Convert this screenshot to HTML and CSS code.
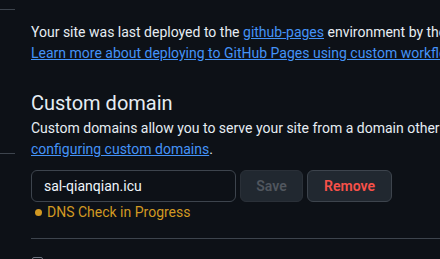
FILE: index.html
```html
<!DOCTYPE html>
<html lang="en">
<head>
    <meta charset="UTF-8">
    <title>GitHub Pages</title>
    <link rel="stylesheet" href="styles.css">
</head>
<body>
    <div class="layout">
        <!-- left nav edge -->
        <div class="gutter">
            <div class="nav-line"></div>
            <div class="nav-line lower"></div>
        </div>

        <div class="main">
            <p class="deploy-note">
                Your site was last deployed to the <a href="#">github-pages</a> environment by the pages build and deployment workflow.<br>
                <a href="#">Learn more about deploying to GitHub Pages using custom workflows</a>
            </p>

            <h2 class="section-title">Custom domain</h2>
            <p class="section-desc">
                Custom domains allow you to serve your site from a domain other than <span class="nowrap">bobbyjames.github.io</span>. <a href="#">Learn more about</a><br>
                <a href="#">configuring custom domains</a>.
            </p>

            <div class="domain-form">
                <input type="text" class="domain-input" value="sal-qianqian.icu">
                <button class="btn btn-save" disabled>Save</button>
                <button class="btn btn-remove">Remove</button>
            </div>
            <div class="dns-status"><span class="dot"></span>DNS Check in Progress</div>

            <div class="divider"></div>
            <div class="checkbox"></div>
        </div>
    </div>
</body>
</html>
```

FILE: styles.css
```css
body {
    margin: 0;
    background-color: #0d1117;
    color: #e6edf3;
    font-family: Roboto, "Noto Sans", sans-serif;
    font-size: 14px;
    overflow: hidden;
    height: 259px;
}
a {
    color: #4493f8;
}
.layout {
    display: flex;
    width: 1000px;
}
.gutter {
    width: 15px;
    padding-top: 9px;
    margin-right: 16px;
}
.nav-line {
    height: 1px;
    background-color: #3d444d;
}
.nav-line.lower {
    margin-top: 143px;
}
.main {
    flex: 1;
}
.deploy-note {
    margin: 22px 0 0 0;
    line-height: 21px;
    white-space: nowrap;
}
.section-title {
    margin: 24px 0 0 0;
    font-size: 20px;
    font-weight: 400;
    line-height: 30px;
}
.section-desc {
    margin: 0;
    line-height: 21px;
    white-space: nowrap;
}
.domain-form {
    display: flex;
    gap: 4px;
    margin-top: 10px;
}
.domain-input {
    box-sizing: border-box;
    width: 205px;
    height: 32px;
    padding: 0 12px;
    background-color: #0d1117;
    border: 1px solid #3d444d;
    border-radius: 6px;
    color: #f0f6fc;
    font-family: inherit;
    font-size: 14px;
    outline: none;
}
.btn {
    box-sizing: border-box;
    height: 32px;
    border-radius: 6px;
    border: 1px solid #3d444d;
    background-color: #212830;
    font-family: inherit;
    font-size: 14px;
    font-weight: 600;
}
.btn-save {
    width: 63px;
    color: #50565e;
    border-color: #2a3038;
}
.btn-remove {
    width: 85px;
    color: #f85149;
}
.dns-status {
    margin-top: 0;
    font-size: 14px;
    line-height: 20px;
    color: #d29922;
    display: flex;
    align-items: center;
    padding-left: 4px;
}
.dot {
    width: 7px;
    height: 7px;
    border-radius: 50%;
    background-color: #d29922;
    margin-right: 5px;
}
.divider {
    height: 1px;
    background-color: #3d444d;
    margin-top: 16px;
}
.checkbox {
    margin-top: 18px;
    margin-left: 1px;
    width: 11px;
    height: 11px;
    border-radius: 2px;
    border: 1px solid #6e7681;
    box-sizing: border-box;
}
```
